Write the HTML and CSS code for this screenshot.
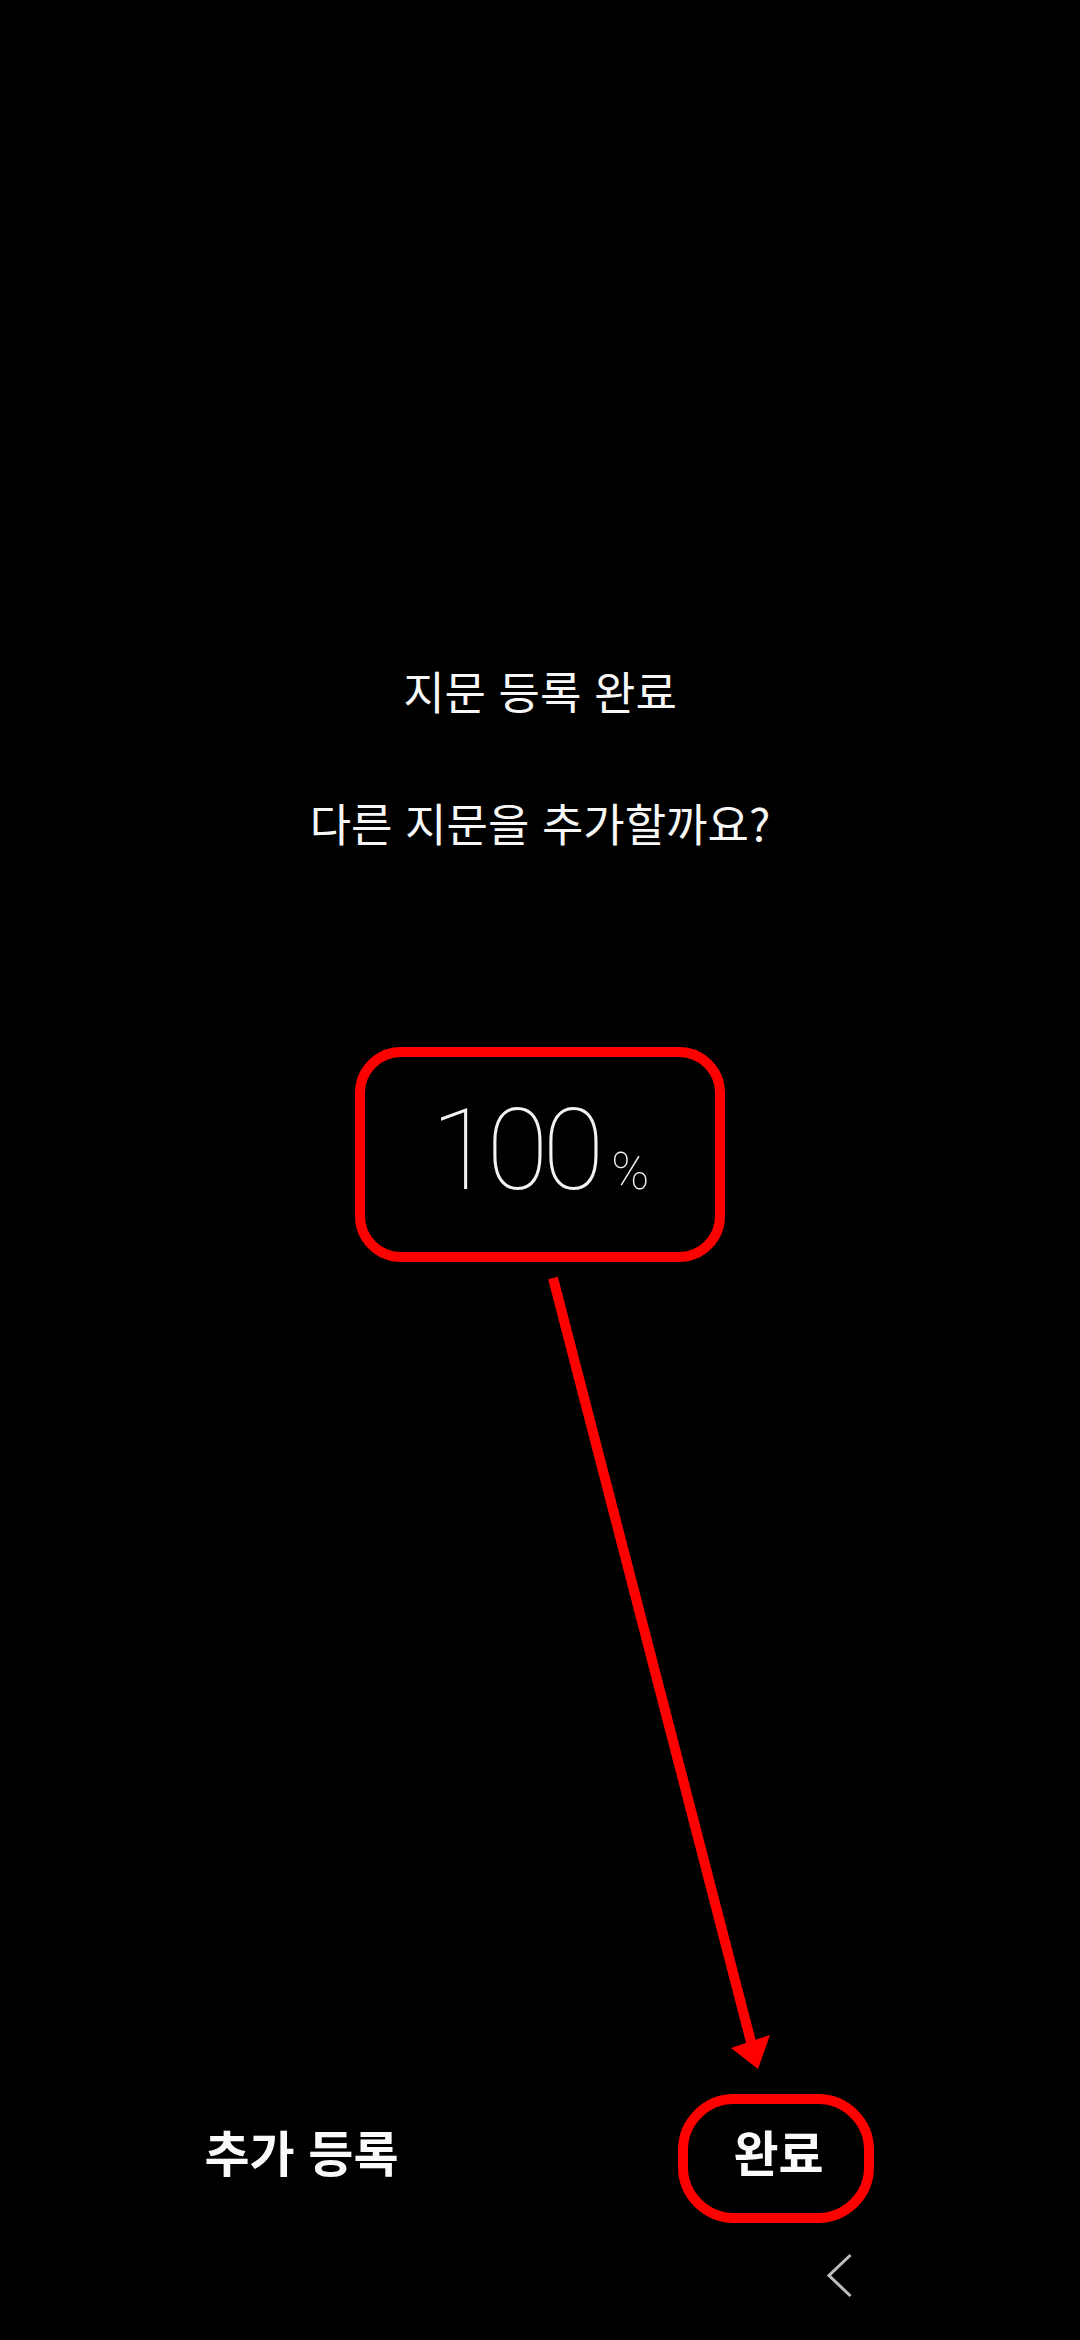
FILE: index.html
```html
<!DOCTYPE html>
<html lang="ko">
<head>
<meta charset="utf-8">
<title>지문 등록 완료</title>
<link rel="stylesheet" href="styles.css">
</head>
<body>
<div class="screen">
  <div class="heading">
    <h1 class="title">지문 등록 완료</h1>
    <p class="question">다른 지문을 추가할까요?</p>
  </div>

  <div class="progress">
    <div class="progress-box">
      <span class="progress-num">100</span><span class="progress-unit">%</span>
    </div>
  </div>

  <div class="spacer"></div>

  <div class="actions">
    <div class="action"><span class="action-label">추가 등록</span></div>
    <div class="action"><span class="action-label action-highlight">완료</span></div>
  </div>

  <div class="navbar">
    <svg class="nav-back" width="26" height="44" viewBox="0 0 26 44">
      <polyline points="23.5,2 2,22.5 23.5,43" fill="none" stroke="#bdbdbd" stroke-width="3"/>
    </svg>
  </div>

  <svg class="annotation" width="1080" height="2340" viewBox="0 0 1080 2340">
    <line x1="553" y1="1278" x2="751" y2="2042" stroke="#ff0000" stroke-width="10"/>
    <polygon points="731,2048 770,2035 758,2069" fill="#ff0000"/>
  </svg>
</div>
</body>
</html>
```

FILE: styles.css
```css
html, body {
  margin: 0;
  padding: 0;
  background: #000;
}

.screen {
  position: relative;
  width: 1080px;
  height: 2340px;
  display: flex;
  flex-direction: column;
  background: #000;
  color: #f7f7f7;
  font-family: "Noto Sans CJK KR", "Noto Sans", sans-serif;
  overflow: hidden;
}

.heading {
  padding-top: 661px;
  text-align: center;
}

.title,
.question {
  margin: 0;
  font-size: 45px;
  font-weight: 400;
  line-height: 60px;
}

.question {
  margin-top: 72px;
}

.progress {
  margin-top: 194px;
  display: flex;
  justify-content: center;
}

.progress-box {
  box-sizing: border-box;
  width: 370px;
  height: 215px;
  border: 10px solid #ff0000;
  border-radius: 46px;
  display: flex;
  justify-content: center;
  align-items: baseline;
  padding-top: 37px;
  font-family: Roboto, "Noto Sans", sans-serif;
  font-weight: 100;
  color: #f2f2f2;
  line-height: 1;
}

.progress-num {
  font-size: 113px;
  letter-spacing: -6px;
}

.progress-unit {
  font-size: 51px;
  margin-left: 13px;
}

.spacer {
  flex: 1;
}

.actions {
  display: flex;
  height: 129px;
  padding: 0 63px;
  align-items: center;
}

.action {
  flex: 1;
  display: flex;
  justify-content: center;
  align-items: center;
  height: 100%;
}

.action-label {
  font-size: 49px;
  font-weight: 700;
  line-height: 1;
  padding-bottom: 16px;
  color: #fafafa;
}

.action-highlight {
  box-sizing: border-box;
  width: 196px;
  height: 129px;
  margin-left: -6px;
  border: 10px solid #ff0000;
  border-radius: 56px;
  display: flex;
  justify-content: center;
  align-items: center;
  padding-bottom: 16px;
  padding-left: 6px;
}

.navbar {
  height: 117px;
  display: flex;
  justify-content: flex-end;
  align-items: center;
  padding-right: 227px;
  padding-bottom: 14px;
  box-sizing: border-box;
}

.nav-back {
  display: block;
}

.annotation {
  position: absolute;
  left: 0;
  top: 0;
  pointer-events: none;
}
```
